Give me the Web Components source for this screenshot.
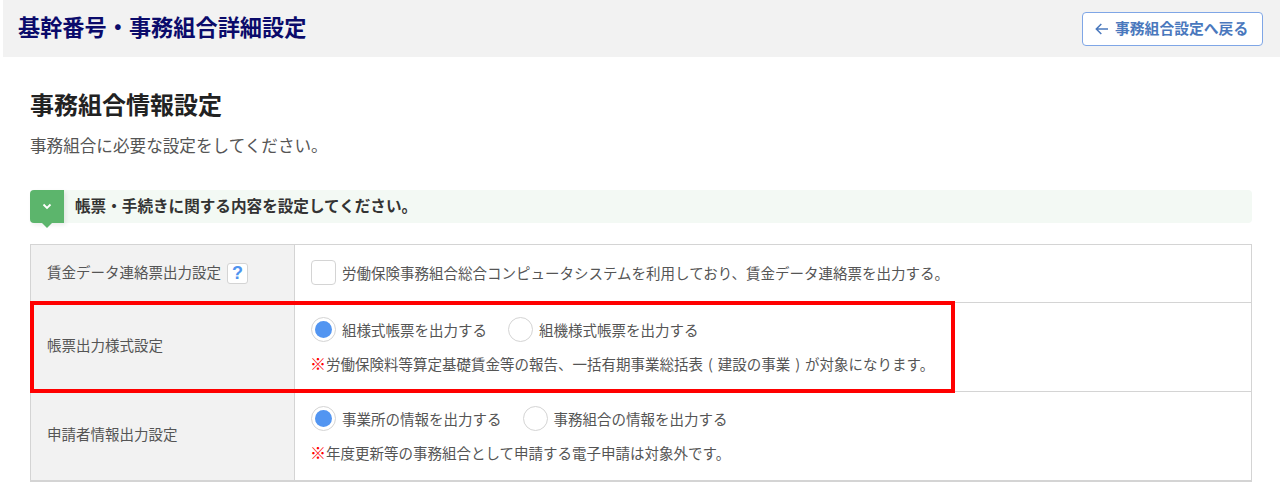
<!DOCTYPE html>
<html lang="ja">
<head>
<meta charset="utf-8">
<title>基幹番号・事務組合詳細設定</title>
<style>
html, body { margin: 0; padding: 0; background: #fff; }
body { font-family: "Noto Sans CJK JP", "Liberation Sans", sans-serif; color: #555; overflow: hidden; }
</style>
</head>
<body>
<page-header heading="基幹番号・事務組合詳細設定">
  <back-button>事務組合設定へ戻る</back-button>
</page-header>
<main-section heading="事務組合情報設定" lead="事務組合に必要な設定をしてください。">
  <step-bar>帳票・手続きに関する内容を設定してください。</step-bar>
  <setting-table>
    <setting-row height="58">
      <span slot="label">賃金データ連絡票出力設定</span>
      <help-mark slot="label"></help-mark>
      <choice-line>
        <check-box>労働保険事務組合総合コンピュータシステムを利用しており、賃金データ連絡票を出力する。</check-box>
      </choice-line>
    </setting-row>
    <setting-row height="89">
      <span slot="label">帳票出力様式設定</span>
      <choice-line>
        <radio-item checked>組様式帳票を出力する</radio-item>
        <radio-item>組機様式帳票を出力する</radio-item>
      </choice-line>
      <note-line>労働保険料等算定基礎賃金等の報告、一括有期事業総括表 ( 建設の事業 ) が対象になります。</note-line>
    </setting-row>
    <setting-row height="88" last>
      <span slot="label">申請者情報出力設定</span>
      <choice-line>
        <radio-item checked>事業所の情報を出力する</radio-item>
        <radio-item>事務組合の情報を出力する</radio-item>
      </choice-line>
      <note-line>年度更新等の事務組合として申請する電子申請は対象外です。</note-line>
    </setting-row>
    <red-frame slot="overlay"></red-frame>
  </setting-table>
</main-section>

<script>
function define(name, html, init) {
    customElements.define(name, class extends HTMLElement {
        constructor() {
            super();
            this.attachShadow({ mode: 'open' });
        }
        connectedCallback() {
            this.shadowRoot.innerHTML = typeof html === 'function' ? html(this) : html;
            if (init) init(this);
        }
    });
}

define('page-header', el => `
    <style>
        :host { display: flex; align-items: center; justify-content: space-between; box-sizing: border-box;
                height: 57px; margin-left: 3px; padding: 0 17px 0 15px; background: #f2f2f2; }
        h1 { margin: 0; font-size: 22.2px; font-weight: 700; line-height: 1; color: #0b0b6b; position: relative; top: -2px; }
    </style>
    <h1>${el.getAttribute('heading')}</h1>
    <slot></slot>
`);

define('back-button', `
    <style>
        :host { display: inline-flex; align-items: center; box-sizing: border-box; width: 181px; height: 34px;
                padding: 0 0 2px 12px; gap: 6px; background: #fff; border: 1px solid #7fa6e6; border-radius: 4px;
                color: #4a78bd; font-size: 14.8px; font-weight: 700; white-space: nowrap; }
        svg { flex: none; position: relative; top: 1px; }
    </style>
    <svg width="14" height="12" viewBox="0 0 14 12" fill="none" stroke="#4a78bd" stroke-width="1.5">
        <path d="M13 6H1.5M6.3 1L1.3 6l5 5"/>
    </svg>
    <span><slot></slot></span>
`);

define('main-section', el => `
    <style>
        :host { display: block; padding: 32px 28px 0 30px; }
        h2 { margin: 0; font-size: 24px; line-height: 30px; font-weight: 700; color: #222; }
        p { margin: 14px 0 0; font-size: 16.6px; line-height: 24px; color: #555; }
        .body { margin-top: 33px; }
    </style>
    <h2>${el.getAttribute('heading')}</h2>
    <p>${el.getAttribute('lead')}</p>
    <div class="body"><slot></slot></div>
`);

define('step-bar', `
    <style>
        :host { display: flex; align-items: center; height: 33px; background: #f3f9f4; border-radius: 4px;
                font-size: 15.6px; font-weight: 700; color: #333; margin-bottom: 21px; }
        .text { padding-bottom: 3px; }
        .tab { position: relative; flex: none; width: 34px; height: 33px; margin-right: 11px; background: #5cb56c;
               border-radius: 4px 0 0 4px; display: flex; align-items: center; justify-content: center;
               box-shadow: 2px 2px 4px rgba(0,0,0,.08); }
        .tab::after { content: ""; position: absolute; left: 12px; bottom: -5px; border-style: solid;
                      border-width: 5px 5px 0; border-color: #5cb56c transparent transparent; }
    </style>
    <div class="tab">
        <svg width="10" height="7" viewBox="0 0 10 7" fill="none" stroke="#fff" stroke-width="1.8"><path d="M1.5 1.5L5 5l3.5-3.5"/></svg>
    </div>
    <span class="text"><slot></slot></span>
`);

define('setting-table', `
    <style>
        :host { display: block; position: relative; border: 1px solid #d4d4d4; border-bottom-width: 2px; box-sizing: border-box; height: 238px; }
    </style>
    <slot></slot>
    <slot name="overlay"></slot>
`);

define('setting-row', el => `
    <style>
        :host { display: grid; grid-template-columns: 264px 1fr; box-sizing: border-box;
                height: ${el.getAttribute('height')}px;
                border-bottom: ${el.hasAttribute('last') ? 0 : '1px solid #d4d4d4'}; }
        .label { display: flex; align-items: center; gap: 6px; padding: 0 0 5px 16px; background: #f2f2f2;
                 border-right: 1px solid #d4d4d4; font-size: 14.5px; color: #555; white-space: nowrap; }
        .value { display: flex; flex-direction: column; justify-content: center; gap: 10px; padding: 0 0 2px 16px; }
    </style>
    <div class="label"><slot name="label"></slot></div>
    <div class="value"><slot></slot></div>
`);

define('help-mark', `
    <style>
        :host { display: inline-flex; align-items: center; justify-content: center; box-sizing: border-box;
                width: 21px; height: 21px; border: 1px solid #d4d4d4; border-radius: 3px; background: #fff;
                color: #4f94ef; font: 700 18px "Liberation Sans", sans-serif; position: relative; top: 2px; }
    </style>
    ?
`);

define('choice-line', `
    <style>
        :host { display: flex; align-items: center; gap: 21px; height: 26px; }
    </style>
    <slot></slot>
`);

define('check-box', `
    <style>
        :host { display: inline-flex; align-items: center; gap: 6px; font-size: 14.5px; color: #555; white-space: nowrap; }
        i { flex: none; box-sizing: border-box; width: 25px; height: 25px; background: #fff; border: 1px solid #d4d4d4; border-radius: 4px; }
    </style>
    <i></i><slot></slot>
`);

define('radio-item', `
    <style>
        :host { display: inline-flex; align-items: center; gap: 6px; font-size: 14.5px; color: #555; white-space: nowrap; }
        i { flex: none; box-sizing: border-box; width: 25px; height: 25px; border: 1px solid #d4d4d4; border-radius: 50%;
            background: #fff; display: flex; align-items: center; justify-content: center; }
        :host([checked]) i::after { content: ""; width: 17px; height: 17px; border-radius: 50%; background: #5295f1; }
    </style>
    <i></i><slot></slot>
`);

define('note-line', `
    <style>
        :host { display: block; font-size: 14.5px; line-height: 22px; color: #555; white-space: nowrap; word-spacing: 1.7px;
                position: relative; top: -1px; }
        b { color: #f00; font-weight: 700; font-size: 16px; margin: 0 0 0 -1px; }
    </style>
    <b>※</b><slot></slot>
`);

define('red-frame', `
    <style>
        :host { position: absolute; left: -1px; top: 56px; width: 925px; height: 92px; box-sizing: border-box;
                border: 4px solid #f00; pointer-events: none; }
    </style>
`);
</script>
</body>
</html>
